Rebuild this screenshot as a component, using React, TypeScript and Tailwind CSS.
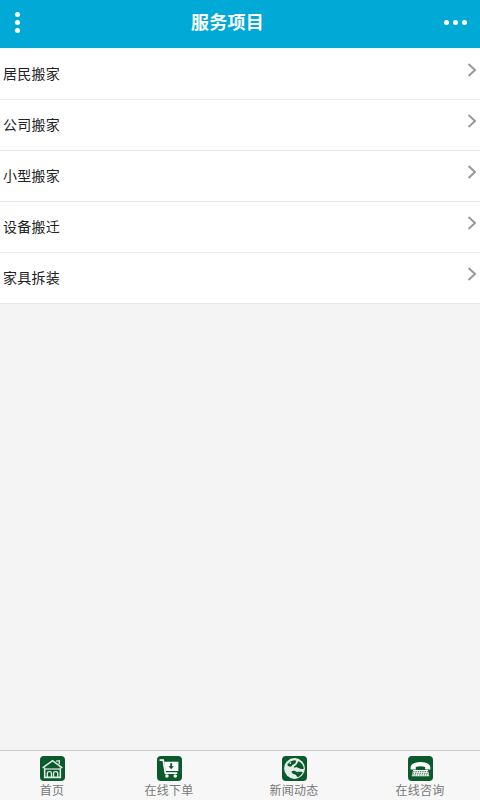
import React from 'react';

const SERVICES = ['居民搬家', '公司搬家', '小型搬家', '设备搬迁', '家具拆装'];

const HomeIcon = () => (
  <svg viewBox="0 0 24 24" className="w-full h-full" fill="none" stroke="#dfe9e3" strokeWidth="1.5">
    <path d="M2.5 11.5 L12 4.5 L21.5 11.5" />
    <path d="M15.5 5 L18.5 4.5 L18.5 8" strokeWidth="1.2" />
    <path d="M4.5 11 V20.5 H19.5 V11" />
    <path d="M5 12.5 H19" strokeWidth="1.2" />
    <path d="M7 20.5 V16.5 Q7 15 8.5 15 H9.5 Q11 15 11 16.5 V20.5 M13 20.5 V16.5 Q13 15 14.5 15 H15.5 Q17 15 17 16.5 V20.5" strokeWidth="1.3" />
  </svg>
);

const CartIcon = () => (
  <svg viewBox="0 0 24 24" className="w-full h-full">
    <path d="M2.5 4 H6 L8 16.5 H19.5" fill="none" stroke="#fff" strokeWidth="1.6" />
    <path d="M7 5.5 H20.5 V14.5 H8.3 Z" fill="#fff" />
    <path d="M12.7 7 H14.5 V9.8 H16.2 L13.6 12.8 L11 9.8 H12.7 Z" fill="#0a5a2b" />
    <circle cx="9.5" cy="19.3" r="1.7" fill="#fff" />
    <circle cx="17.5" cy="19.3" r="1.7" fill="#fff" />
  </svg>
);

const GlobeIcon = () => (
  <svg viewBox="0 0 24 24" className="w-full h-full">
    <circle cx="12" cy="12" r="10" fill="#e4eee8" />
    <path d="M5 8.5 C7 5.5 10 4 13 4.2 C14.5 6 12 8 10 8.5 C9.5 10.5 7 11.5 5 8.5 Z" fill="#0a5a2b" />
    <path d="M15.5 5 C18.5 6 20.5 9 21 12 C19 13.5 16 11.5 14 10.5 C12 11.5 11 11 11.5 10 C13 9 15 7.5 15.5 5 Z" fill="#0a5a2b" />
    <path d="M9 15 C11 13.5 13 14.5 14.5 15.5 C16 15 18 15 20 15.5 C19 17.5 17 19.5 15 20.5 C13.5 19 14 18 12 17.5 C10.5 17.5 9.5 16.5 9 15 Z" fill="#0a5a2b" />
    <circle cx="8" cy="6.8" r="0.9" fill="#e4eee8" />
  </svg>
);

const PhoneIcon = () => (
  <svg viewBox="0 0 24 24" className="w-full h-full">
    <path d="M2.5 11 C2.5 4 21.5 4 21.5 11 V13 H16.5 V10.5 C14 9.5 10 9.5 7.5 10.5 V13 H2.5 Z" fill="#fff" />
    <path d="M5 13.5 H19 L20.5 19.5 H3.5 Z" fill="#fff" />
    <path d="M5 15 H19 M4.5 16.6 H19.5 M4 18.2 H20" stroke="#0a5a2b" strokeWidth="0.8" strokeDasharray="1.3 0.9" />
  </svg>
);

const TABS = [
  { label: '首页', icon: <HomeIcon />, cls: '' },
  { label: '在线下单', icon: <CartIcon />, cls: 'ml-[67px]' },
  { label: '新闻动态', icon: <GlobeIcon />, cls: 'ml-[75px]' },
  { label: '在线咨询', icon: <PhoneIcon />, cls: 'ml-[76px]' },
];

export default function App() {
  return (
    <div
      className="h-[800px] w-[480px] flex flex-col overflow-hidden bg-[#f4f4f4]"
      style={{ fontFamily: '"Liberation Sans", "Noto Sans CJK SC", sans-serif' }}
    >
      {/* header */}
      <div className="h-12 shrink-0 flex items-center bg-[#00a9d6] text-white">
        <div className="w-[35px] shrink-0 flex flex-col items-center gap-[3px] mb-[3px]">
          <span className="w-[5px] h-[5px] rounded-full bg-white" />
          <span className="w-[5px] h-[5px] rounded-full bg-white" />
          <span className="w-[5px] h-[5px] rounded-full bg-white" />
        </div>
        <div className="flex-1 pr-[24px] mb-[1px] text-center text-[18px] tracking-[0.2px] font-bold">服务项目</div>
        <div className="shrink-0 flex items-center gap-[4px] pr-[13px] mb-[3px]">
          <span className="w-[5px] h-[5px] rounded-full bg-white" />
          <span className="w-[5px] h-[5px] rounded-full bg-white" />
          <span className="w-[5px] h-[5px] rounded-full bg-white" />
        </div>
      </div>

      {/* list */}
      <div className="flex-1 pt-[1px]">
        {SERVICES.map((name) => (
          <div key={name} className="h-[51px] flex items-center justify-between bg-white border-b border-[#e8e8e8] pl-[3px] pr-[3px]">
            <span className="text-[14px] tracking-[0.25px] text-[#222222] pt-[1px]">{name}</span>
            <svg width="10" height="14" viewBox="0 0 10 14" fill="none" stroke="#999999" strokeWidth="2" className="mb-[8px]">
              <path d="M1.5 1 L8 7 L1.5 13" />
            </svg>
          </div>
        ))}
      </div>

      {/* bottom tabs */}
      <div className="h-[50px] shrink-0 flex pl-[27px] bg-[#f7f7f7] border-t border-[#cccccc]">
        {TABS.map((tab) => (
          <div key={tab.label} className={`w-[50px] flex flex-col items-center pt-[5px] ${tab.cls}`}>
            <div className="w-[25px] h-[25px] rounded-[4px] bg-[#0a5a2b]">{tab.icon}</div>
            <span className="mt-[3px] text-[12px] tracking-[0.25px] leading-[14px] text-[#777777] whitespace-nowrap">{tab.label}</span>
          </div>
        ))}
      </div>
    </div>
  );
}
